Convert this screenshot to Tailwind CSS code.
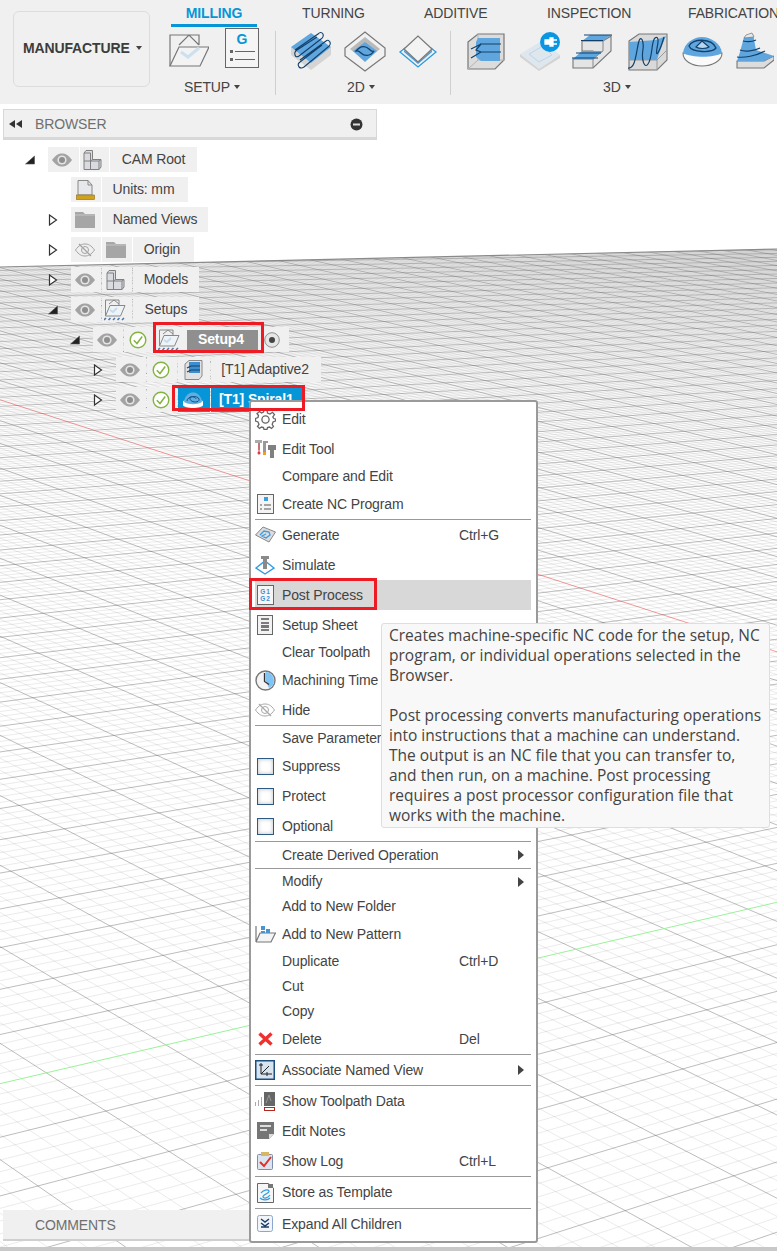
<!DOCTYPE html>
<html lang="en">

<head>
  <meta charset="UTF-8" />
  <title>Manufacture - Post Process</title>
  <script src="https://cdn.jsdelivr.net/npm/@tailwindcss/browser@4"></script>
</head>

<body class="bg-white">
  <!-- shared icons -->
  <svg class="hidden">
    <symbol id="eye" viewBox="0 0 20 14">
      <path d="M0 7C4 1.500 7 .5 10 .5S16 1.500 20 7C16 12.500 13 13.500 10 13.500S4 12.500 0 7Z" fill="#a3a3a3" />
      <circle cx="10" cy="7" r="4.600" fill="#e4e4e4" />
      <circle cx="10" cy="7" r="3" fill="#8e8e8e" />
    </symbol>
    <symbol id="check" viewBox="0 0 18 18">
      <circle cx="9" cy="9" r="7.800" fill="#fff" stroke="#83b341" stroke-width="1.400" />
      <path d="M4.800 9.200 8 12.500 13.200 5.500" fill="none" stroke="#83b341" stroke-width="1.500" />
    </symbol>
    <symbol id="open" viewBox="0 0 10 12">
      <path d="M1.500 1 8.500 6 1.500 11Z" fill="#fff" stroke="#333" stroke-width="1.200" />
    </symbol>
    <symbol id="down" viewBox="0 0 10 10">
      <path d="M9.500 1V9H.5Z" fill="#222" stroke="#555" stroke-width=".6" />
    </symbol>
    <symbol id="model" viewBox="0 0 20 20">
      <path d="M1 3 3 .5H9.500V9.500H18V17L16 19.500H1Z" fill="#d9dbe0" stroke="#808080" stroke-width="1" />
      <path d="M1 3H7.500V19.500M1 11H7.500L9.500 9.500M7.500 11H16V19.500M16 11 18 9.500" fill="none" stroke="#808080" stroke-width="1" />
    </symbol>
    <symbol id="folder" viewBox="0 0 20 16">
      <path d="M0 0H8L10 2H20V16H0Z" fill="#a6a6a6" />
      <path d="M0 3H20" stroke="#c6c6c6" stroke-width="1" />
    </symbol>
    <symbol id="setup" viewBox="0 0 24 24">
      <path d="M1.500 18V2H15V7M5 6 10 2 15 6" fill="none" stroke="#888" stroke-width="1" />
      <path d="M6 7.500H21L16.500 18H1.500Z" fill="#eef3f7" stroke="#888" stroke-width="1" />
      <path d="M6 12 9 14 13 10" fill="none" stroke="#c3dcef" stroke-width="2" />
      <path d="M0 22 2 20M4.500 22 6.500 20M9 22 11 20M13.500 22 15.500 20M18 22 20 20" stroke="#4c78ab" stroke-width="1.600" />
    </symbol>
  </svg>

  <div class="relative w-[777px] h-[1251px] overflow-hidden bg-white font-['Liberation_Sans',sans-serif] text-[14px] tracking-[-0.13px] text-[#444]">

    <!-- viewport grid, filled in by the script below -->
    <svg id="grid" class="absolute inset-0" width="777" height="1251">
      <defs>
        <clipPath id="floor">
          <polygon points="0,267 777,249 777,1251 0,1251" />
        </clipPath>
      </defs>
      <g id="gridLines" clip-path="url(#floor)"></g>
      <line x1="0" y1="267" x2="777" y2="249" stroke="#8a8a8a" stroke-width="1.200" />
    </svg>

    <!-- toolbar -->
    <div class="relative flex h-[104px] bg-[#f0f0f0]">
      <div class="w-[171px] shrink-0 pl-[13px] pt-[11px]">
        <div class="flex h-[76px] w-[137px] items-center rounded-[6px] border border-[#dcdcdc] pb-[2px] pl-[9px] font-bold text-[#3c3c3c]">
          MANUFACTURE
          <span class="ml-[6px] h-0 w-0 border-x-[3.5px] border-t-[4px] border-x-transparent border-t-[#444]"></span>
        </div>
      </div>
      <div class="flex-1">
        <!-- tabs -->
        <div class="flex h-[28px] whitespace-nowrap">
          <div class="h-[27px] w-[86px] border-b-[3px] border-[#0696d7] pt-[3px] text-center font-bold text-[#0696d7]">MILLING</div>
          <div class="w-[167px] pl-[45px] pt-[3px]">TURNING</div>
          <div class="w-[123px] pt-[3px]">ADDITIVE</div>
          <div class="w-[141px] pt-[3px]">INSPECTION</div>
          <div class="pt-[3px]">FABRICATION</div>
        </div>
        <!-- groups -->
        <div class="flex">
          <div class="w-[104px]">
            <div class="ml-[-2px] flex h-[44px] items-start">
              <svg width="40" height="38" viewBox="0 0 40 38" class="mt-[4px]">
                <path d="M1 34V3H30V13M10 13 20 3 30 13" fill="none" stroke="#777" stroke-width="1.200" />
                <path d="M10 15H40L31 34H1Z" fill="#f3f3f3" stroke="#777" stroke-width="1.200" />
                <path d="M12 20 19 25 30 16" fill="none" stroke="#cde0ef" stroke-width="3" />
              </svg>
              <svg width="35" height="40" viewBox="0 0 35 40" class="ml-[16px]">
                <rect x=".5" y=".5" width="33" height="39" fill="#f5f5f5" stroke="#666" />
                <text x="17" y="16" text-anchor="middle" font-family="Liberation Sans" font-weight="700" font-size="14" fill="#0696d7">G</text>
                <rect x="5" y="22" width="3" height="3" fill="#666" />
                <rect x="5" y="30" width="3" height="3" fill="#666" />
                <path d="M10 23.500H30M10 31.500H30" stroke="#666" />
              </svg>
            </div>
            <div class="mt-[6px] flex h-[18px] items-center pl-[13px]">SETUP<span class="ml-[4px] h-0 w-0 border-x-[3px] border-t-[4px] border-x-transparent border-t-[#444]"></span></div>
          </div>
          <div class="my-[3px] h-[64px] w-px bg-[#cfcfcf]"></div>
          <div class="w-[174px]">
            <div class="flex h-[44px] items-start pl-[14px]">
              <svg width="42" height="42" viewBox="0 0 42 42" class="mt-[3px]">
                <path d="M1 16 21 32 41 16V24L21 39 1 24Z" fill="#d4d4d4" />
                <path d="M1 16 21 2 41 16 21 32Z" fill="#5fa6de" />
                <path d="M5 19 28 3Q31 0 33 3 34 6 31 8L9 25Q6 27 5 24 4 21 7 19L27 6M10 29 36 10Q38 8 40 11 41 14 38 16L14 36Q11 38 9 36 7 33 10 31L32 14" fill="none" stroke="#12406b" stroke-width="1.100" />
              </svg>
              <svg width="42" height="42" viewBox="0 0 42 42" class="ml-[12px] mt-[3px]">
                <path d="M1 17 21 1 41 17V25L21 40 1 25Z" fill="#f1f1f1" stroke="#777" stroke-width="1.200" />
                <path d="M6 18 21 6 36 18 21 30Z" fill="#b9b9b9" />
                <path d="M9 20 21 11 33 20 21 31Z" fill="#5fa6de" />
                <path d="M12 20C17 14 22 15 25 18S29 21 30 20C26 26 20 25 17 22S13 20 12 20Z" fill="none" stroke="#12406b" stroke-width="1.300" />
              </svg>
              <svg width="40" height="36" viewBox="0 0 40 36" class="ml-[12px] mt-[6px]">
                <path d="M2 18 20 33 38 18 33 14 20 25 7 14Z" fill="none" stroke="#2c9be0" stroke-width="1.300" />
                <path d="M6 16 20 28 34 16V18L20 30 6 18Z" fill="#4f9bd6" />
                <path d="M6 15 20 2 34 15 20 28Z" fill="#f3f3f3" stroke="#777" stroke-width="1.200" />
              </svg>
            </div>
            <div class="mt-[6px] flex h-[18px] items-center pl-[71px]">2D<span class="ml-[4px] h-0 w-0 border-x-[3px] border-t-[4px] border-x-transparent border-t-[#444]"></span></div>
          </div>
          <div class="my-[3px] h-[64px] w-px bg-[#cfcfcf]"></div>
          <div class="flex-1">
            <div class="flex h-[44px] items-start pl-[16px]">
              <svg width="38" height="38" viewBox="0 0 38 38" class="mt-[5px]">
                <path d="M1 9 11 1H37V27L28 36H1Z" fill="#dcdcdc" stroke="#777" stroke-width="1.200" />
                <path d="M1 36 11 27H37M11 27V1" fill="none" stroke="#b5b5b5" />
                <path d="M11 5H33V28H14L9 24V9Z" fill="#5fa6de" />
                <path d="M4 16 14 11H34M4 25 14 19H34M14 11 9 17 14 19" fill="none" stroke="#12406b" stroke-width="1.200" />
              </svg>
              <svg width="42" height="40" viewBox="0 0 42 40" class="ml-[14px] mt-[3px]">
                <path d="M1 23 24 9 41 24 20 38Z" fill="#dfe7ee" />
                <path d="M1 23 20 38V40L1 26ZM20 38 41 24V27L20 40Z" fill="#d3d3d3" />
                <path d="M10 23 24 15 33 24 20 31Z" fill="none" stroke="#bcd5e8" />
                <circle cx="31" cy="11" r="10" fill="#0a96e2" />
                <path d="M26 9H31V7H34V15H31V13H26ZM34 9H38M34 13H38" fill="#fff" stroke="#fff" stroke-width="1.300" />
              </svg>
              <svg width="42" height="38" viewBox="0 0 42 38" class="ml-[11px] mt-[5px]">
                <path d="M1 26H21V18H10V8H31L39 3V18L21 35H1Z" fill="#e4e4e4" stroke="#777" stroke-width="1.100" />
                <path d="M31 8V18L21 26M21 35V26" fill="none" stroke="#888" />
                <path d="M10 8 18 2H39L31 8Z" fill="#5fa6de" />
                <path d="M1 26 10 18H31L21 26Z" fill="#5fa6de" />
                <path d="M12 2H40M9 7.500H31M4 20H29M0 25H26" stroke="#12406b" stroke-width="1.200" />
              </svg>
              <svg width="41" height="38" viewBox="0 0 41 38" class="ml-[14px] mt-[5px]">
                <path d="M1 8 11 1H39V27L29 37H1Z" fill="#d9d9d9" stroke="#777" stroke-width="1.100" />
                <path d="M1 27H29V37M29 27 39 17" fill="none" stroke="#999" />
                <path d="M1 9 28 7 38 3C35 10 31 20 29 27H1Z" fill="#5fa6de" />
                <path d="M0 35C8 36 8 18 11 8 13 2 16 8 15 16 13 28 17 36 20 31 25 24 23 8 27 5 30 3 31 6 29 15 27 27 32 18 36 4" fill="none" stroke="#12406b" stroke-width="1.200" />
              </svg>
              <svg width="41" height="31" viewBox="0 0 41 31" class="ml-[13px] mt-[8px]">
                <path d="M1 17C1 25 10 30 20 30S40 25 40 17Z" fill="#fafafa" stroke="#777" stroke-width="1.100" />
                <path d="M1 17C2 7 12 1 20 1S39 7 40 17C32 22 10 22 1 17Z" fill="#5fa6de" />
                <path d="M7 10C10 2 30 2 34 12 30 17 10 17 7 10Z" fill="none" stroke="#12406b" stroke-width="1.300" />
                <path d="M14 11 20 5 27 11C24 13 17 13 14 11Z" fill="#b8d6ee" stroke="#12406b" stroke-width="1.200" />
              </svg>
              <svg width="38" height="37" viewBox="0 0 38 37" class="ml-[13px] mt-[4px]">
                <path d="M1 29H28L38 24V28L28 36H1Z" fill="#dcdcdc" stroke="#777" stroke-width="1.100" />
                <path d="M8 5 17 2 20 18 38 24 28 29H1L4 20Z" fill="#5fa6de" />
                <path d="M10 3 16 1 18 5 8 6Z" fill="#e8e8e8" stroke="#777" stroke-width=".7" />
                <path d="M7 9C11 10 16 10 20 8M4 18C9 20 18 19 24 16M1 25C8 26 20 24 29 19" fill="none" stroke="#12406b" stroke-width="1.200" />
              </svg>
            </div>
            <div class="mt-[6px] flex h-[18px] items-center pl-[152px]">3D<span class="ml-[4px] h-0 w-0 border-x-[3px] border-t-[4px] border-x-transparent border-t-[#444]"></span></div>
          </div>
        </div>
      </div>
    </div>

    <!-- browser panel -->
    <div class="relative ml-[3px] mt-[5px] flex h-[31px] w-[374px] items-center border border-b-[3px] border-[#d8d8d8] bg-[#f0f0f0] pl-[5px] pr-[13px] pt-[1px] text-[#6f6f6f]">
      <svg width="13" height="8" viewBox="0 0 13 8">
        <path d="M6 0V8L0 4ZM13 0V8L7 4Z" fill="#333" />
      </svg>
      <span class="ml-[13px]">BROWSER</span>
      <svg class="ml-auto" width="13" height="13" viewBox="0 0 13 13">
        <circle cx="6.500" cy="6.500" r="6" fill="#333" />
        <rect x="3" y="5.500" width="7" height="2" fill="#ddd" />
      </svg>
    </div>

    <!-- tree -->
    <div class="relative mt-[7px] flex flex-col gap-[5px]">
      <div class="ml-[25px] flex h-[25px] items-center">
        <svg width="23" height="10" viewBox="0 0 23 10"><use href="#down" width="10" height="10" /></svg>
        <div class="flex h-full gap-px">
          <div class="flex w-[31px] items-center justify-center bg-[#f0f0f0] pr-[3px]"><svg width="20" height="14"><use href="#eye" /></svg></div>
          <div class="flex w-[29px] items-center justify-center bg-[#f0f0f0] pr-[3px]"><svg width="20" height="20"><use href="#model" /></svg></div>
          <div class="flex w-[87px] items-center justify-center bg-[#f0f0f0]">CAM Root</div>
        </div>
      </div>
      <div class="ml-[71px] flex h-[25px] gap-px">
        <div class="flex w-[30px] items-center justify-center bg-[#f0f0f0] pr-[2px]">
          <svg width="19" height="20" viewBox="0 0 19 20">
            <path d="M2 .5H12L16 5V15H2Z" fill="#e6e8ec" stroke="#888" />
            <path d="M12 .5V5H16" fill="none" stroke="#888" />
            <rect x=".5" y="15" width="18" height="4.500" fill="#d3a21c" stroke="#8a6a10" stroke-width=".6" />
          </svg>
        </div>
        <div class="flex w-[86px] items-center justify-center bg-[#f0f0f0] pr-[3px]">Units: mm</div>
      </div>
      <div class="ml-[48px] flex h-[25px] items-center">
        <svg width="23" height="12" viewBox="0 0 23 12"><use href="#open" width="10" height="12" /></svg>
        <div class="flex h-full gap-px">
          <div class="flex w-[30px] items-center justify-center bg-[#f0f0f0] pr-[3px]"><svg width="20" height="16"><use href="#folder" /></svg></div>
          <div class="flex w-[106px] items-center justify-center bg-[#f0f0f0]">Named Views</div>
        </div>
      </div>
      <div class="ml-[48px] flex h-[25px] items-center">
        <svg width="23" height="12" viewBox="0 0 23 12"><use href="#open" width="10" height="12" /></svg>
        <div class="flex h-full gap-px">
          <div class="flex w-[30px] items-center justify-center bg-[#f0f0f0] pr-[3px]">
            <svg width="20" height="14" viewBox="0 0 20 14">
              <path d="M.5 7C4 2 7 1 10 1S16 2 19.500 7C16 12 13 13 10 13S4 12 .5 7Z" fill="none" stroke="#a3a3a3" />
              <circle cx="10" cy="7" r="3.500" fill="none" stroke="#a3a3a3" />
              <path d="M4 1 16 13" stroke="#a3a3a3" stroke-width="1.300" />
            </svg>
          </div>
          <div class="flex w-[30px] items-center justify-center bg-[#f0f0f0] pr-[3px]"><svg width="20" height="16"><use href="#folder" /></svg></div>
          <div class="flex w-[61px] items-center justify-center bg-[#f0f0f0] pr-[3px]">Origin</div>
        </div>
      </div>
      <div class="ml-[48px] flex h-[25px] items-center">
        <svg width="23" height="12" viewBox="0 0 23 12"><use href="#open" width="10" height="12" /></svg>
        <div class="flex h-full gap-px">
          <div class="flex w-[30px] items-center justify-center bg-[#f0f0f0] pr-[3px]"><svg width="20" height="14"><use href="#eye" /></svg></div>
          <div class="flex w-[30px] items-center justify-center bg-[#f0f0f0] pr-[3px]"><svg width="20" height="20"><use href="#model" /></svg></div>
          <div class="flex w-[66px] items-center justify-center bg-[#f0f0f0]">Models</div>
        </div>
      </div>
      <div class="ml-[48px] flex h-[25px] items-center">
        <svg width="23" height="10" viewBox="0 0 23 10"><use href="#down" width="10" height="10" /></svg>
        <div class="flex h-full gap-px">
          <div class="flex w-[30px] items-center justify-center bg-[#f0f0f0] pr-[3px]"><svg width="20" height="14"><use href="#eye" /></svg></div>
          <div class="flex w-[30px] items-center justify-center bg-[#f0f0f0] pr-[3px]"><svg width="24" height="24"><use href="#setup" /></svg></div>
          <div class="flex w-[66px] items-center justify-center bg-[#f0f0f0]">Setups</div>
        </div>
      </div>
      <div class="ml-[70px] flex h-[25px] items-center">
        <svg width="23" height="10" viewBox="0 0 23 10"><use href="#down" width="10" height="10" /></svg>
        <div class="flex h-full gap-px">
          <div class="flex w-[30px] items-center justify-center bg-[#f0f0f0] pr-[3px]"><svg width="20" height="14"><use href="#eye" /></svg></div>
          <div class="flex w-[30px] items-center justify-center bg-[#f0f0f0] pr-[3px]"><svg width="18" height="18"><use href="#check" /></svg></div>
          <div class="flex w-[108px] items-center bg-[#f0f0f0] pl-[3px]">
            <svg width="24" height="24"><use href="#setup" /></svg>
            <div class="ml-[5px] flex h-[20px] w-[71px] items-center bg-[#8f8f8f] pl-[11px] font-bold text-white">Setup4</div>
          </div>
          <div class="flex w-[25px] items-center bg-[#f0f0f0]">
            <svg width="16" height="16" viewBox="0 0 16 16">
              <circle cx="8" cy="8" r="7.300" fill="#e6e6e6" stroke="#8f8f8f" />
              <circle cx="8" cy="8" r="3" fill="#444" />
            </svg>
          </div>
        </div>
      </div>
      <div class="ml-[93px] flex h-[25px] items-center">
        <svg width="23" height="12" viewBox="0 0 23 12"><use href="#open" width="10" height="12" /></svg>
        <div class="flex h-full gap-px">
          <div class="flex w-[30px] items-center justify-center bg-[#f0f0f0] pr-[3px]"><svg width="20" height="14"><use href="#eye" /></svg></div>
          <div class="flex w-[30px] items-center justify-center bg-[#f0f0f0] pr-[3px]"><svg width="18" height="18"><use href="#check" /></svg></div>
          <div class="flex w-[32px] items-center justify-center bg-[#f0f0f0] pr-[2px]">
            <svg width="19" height="20" viewBox="0 0 19 20">
              <path d="M1 4 5 .5H18V16L15 19.500H1Z" fill="#e2e2e2" stroke="#888" />
              <path d="M5 2H16V13H5Z" fill="#3b8fd0" />
              <path d="M3 8 7 6H16M3 12 7 10H16" fill="none" stroke="#12406b" stroke-width="1.200" />
            </svg>
          </div>
          <div class="flex w-[110px] items-center justify-center bg-[#f0f0f0] pr-[2px]">[T1] Adaptive2</div>
        </div>
      </div>
      <div class="ml-[93px] flex h-[25px] items-center">
        <svg width="23" height="12" viewBox="0 0 23 12"><use href="#open" width="10" height="12" /></svg>
        <div class="flex h-full gap-px">
          <div class="flex w-[30px] items-center justify-center bg-[#f0f0f0] pr-[3px]"><svg width="20" height="14"><use href="#eye" /></svg></div>
          <div class="flex w-[30px] items-center justify-center bg-[#f0f0f0] pr-[3px]"><svg width="18" height="18"><use href="#check" /></svg></div>
          <div class="flex w-[32px] items-center justify-center bg-[#0696d7] pr-[2px]">
            <svg width="20" height="16" viewBox="0 0 20 16">
              <path d="M0 10C0 8 4 8 10 8S20 8 20 10V13C20 15 14 16 10 16S0 15 0 13Z" fill="#fff" />
              <path d="M1 10C2 3 6 .5 10 .5S18 3 19 10C14 13 6 13 1 10Z" fill="#5eb0e4" />
              <path d="M4 9C4 4 15 3 16 7S8 11 7 7 13 5 13 7" fill="none" stroke="#14507f" />
            </svg>
          </div>
          <div class="flex w-[93px] items-center bg-[#0696d7] pl-[8px] font-bold whitespace-nowrap text-white">[T1] Spiral1</div>
        </div>
      </div>
    </div>

    <!-- comments panel -->
    <div class="absolute bottom-[10px] left-[3px] flex h-[31px] w-[250px] items-center border-b-2 border-[#cfcfcf] bg-[#f0f0f0] pl-[32px] pt-[2px] text-[#6f6f6f]">COMMENTS</div>

    <!-- context menu -->
    <div class="absolute left-[249px] top-[400px] w-[289px] rounded-[3px] border-2 border-[#9a9a9a] bg-white pb-[2px] pl-[4px] pr-[5px] pt-[2px]">
      <div class="flex h-[30px] items-center">
        <span class="w-[27px] shrink-0">
          <svg width="21" height="21" viewBox="0 0 21 21">
            <circle cx="10.500" cy="10.500" r="3.600" fill="#fff" stroke="#666" stroke-width="1.300" />
            <path d="M9 1H12L12.500 4 15 5 17.500 3.300 19.500 5.500 17.800 8 18.800 9.500 20.500 10V12L18 13 17.200 15.500 18.500 17.500 16.500 19.500 14.500 18 12.500 18.500 12 20.500H9L8.500 18.500 6.500 18 4.500 19.500 2.500 17.500 4 15.500 3 13 .5 12V9.500L3 8.500 3.500 6.500 2 4.500 4.500 2.500 6.500 4 8.500 3Z" fill="none" stroke="#666" stroke-width="1.300" />
          </svg>
        </span>Edit
      </div>
      <div class="flex h-[30px] items-center">
        <span class="w-[27px] shrink-0">
          <svg width="21" height="20" viewBox="0 0 21 20">
            <path d="M0 1H7V4H5V11H3V4H0Z" fill="#aaa" />
            <circle cx="4" cy="14" r="1.500" fill="#e23a3a" /><path d="M4 4V14" stroke="#e23a3a" />
            <path d="M8 2H13V4H11V13H8Z" fill="#999" />
            <rect x="8" y="13" width="3" height="3" fill="#f0a020" />
            <path d="M13 6H21V11H19V19H15V11H13Z" fill="#808080" />
          </svg>
        </span>Edit Tool
      </div>
      <div class="flex h-[25px] items-center pl-[27px]">Compare and Edit</div>
      <div class="flex h-[30px] items-center">
        <span class="w-[27px] shrink-0">
          <svg width="18" height="20" viewBox="0 0 18 20" class="ml-[2px]">
            <rect x=".5" y=".5" width="16" height="19" fill="#f4f4f4" stroke="#666" />
            <rect x="7" y="3" width="4" height="4" fill="#3d9be0" />
            <path d="M3 11H5M7 11H14M3 15H5M7 15H14" stroke="#555" stroke-width="1.200" />
          </svg>
        </span>Create NC Program
      </div>
      <div class="h-px bg-[#999]"></div>
      <div class="flex h-[30px] items-center">
        <span class="w-[27px] shrink-0">
          <svg width="21" height="18" viewBox="0 0 21 18">
            <path d="M.5 9 8 1 20.500 6 14 16Z" fill="#dcdcdc" stroke="#888" />
            <path d="M5 9 9 5 14 6 15 9 11 12 7 10 11 8" fill="none" stroke="#3d9be0" stroke-width="1.300" />
          </svg>
        </span>Generate<span class="ml-auto w-[72px]">Ctrl+G</span>
      </div>
      <div class="flex h-[30px] items-center">
        <span class="w-[27px] shrink-0">
          <svg width="20" height="20" viewBox="0 0 20 20">
            <path d="M1 13 10 6 19 13 10 19Z" fill="none" stroke="#2f9be0" stroke-width="1.400" />
            <path d="M6 1H14V4H12V14H8V4H6Z" fill="#8a8a8a" />
          </svg>
        </span>Simulate
      </div>
      <div class="flex h-[30px] items-center bg-[#d8d8d8]">
        <span class="w-[27px] shrink-0">
          <svg width="18" height="20" viewBox="0 0 18 20" class="ml-[2px]">
            <rect x=".5" y=".5" width="16" height="19" fill="#f6f6f6" stroke="#666" />
            <text x="8.500" y="9" text-anchor="middle" font-family="Liberation Sans" font-weight="700" font-size="6.500" letter-spacing="1" fill="#3d8fd0">G1</text>
            <text x="8.500" y="16" text-anchor="middle" font-family="Liberation Sans" font-weight="700" font-size="6.500" letter-spacing="1" fill="#3d8fd0">G2</text>
          </svg>
        </span>Post Process
      </div>
      <div class="flex h-[30px] items-center">
        <span class="w-[27px] shrink-0">
          <svg width="18" height="20" viewBox="0 0 18 20" class="ml-[2px]">
            <rect x=".5" y=".5" width="15" height="19" fill="#f2f2f2" stroke="#666" />
            <path d="M4 4H12M4 8H12M4 15H12" stroke="#555" stroke-width="1.400" />
            <rect x="4" y="10" width="8" height="3" fill="#777" />
          </svg>
        </span>Setup Sheet
      </div>
      <div class="flex h-[25px] items-center pl-[27px]">Clear Toolpath</div>
      <div class="flex h-[30px] items-center">
        <span class="w-[27px] shrink-0">
          <svg width="21" height="21" viewBox="0 0 21 21">
            <circle cx="10.500" cy="10.500" r="9.500" fill="#f4f4f4" stroke="#777" stroke-width="1.400" />
            <path d="M10.500 2A8.500 8.500 0 0 1 19 10.500 8.500 8.500 0 0 1 14 18L10.500 10.500Z" fill="#7fc4f5" />
            <path d="M9.500 3V11.500L14 14.500" fill="none" stroke="#333" stroke-width="1.300" />
          </svg>
        </span>Machining Time
      </div>
      <div class="flex h-[30px] items-center">
        <span class="w-[27px] shrink-0">
          <svg width="20" height="14" viewBox="0 0 20 14">
            <path d="M.5 7C4 2 7 1 10 1S16 2 19.500 7C16 12 13 13 10 13S4 12 .5 7Z" fill="none" stroke="#a8a8a8" />
            <circle cx="10" cy="7" r="3.500" fill="none" stroke="#a8a8a8" />
            <path d="M4 1 16 13" stroke="#a8a8a8" stroke-width="1.300" />
          </svg>
        </span>Hide
      </div>
      <div class="h-px bg-[#999]"></div>
      <div class="flex h-[25px] items-center pl-[27px]">Save Parameters</div>
      <div class="flex h-[30px] items-center">
        <span class="ml-[2px] mr-[8px] h-[17px] w-[17px] shrink-0 border-[1.5px] border-[#2a5b86] bg-white shadow-[inset_0_0_4px_#bbb]"></span>Suppress
      </div>
      <div class="flex h-[30px] items-center">
        <span class="ml-[2px] mr-[8px] h-[17px] w-[17px] shrink-0 border-[1.5px] border-[#2a5b86] bg-white shadow-[inset_0_0_4px_#bbb]"></span>Protect
      </div>
      <div class="flex h-[30px] items-center">
        <span class="ml-[2px] mr-[8px] h-[17px] w-[17px] shrink-0 border-[1.5px] border-[#2a5b86] bg-white shadow-[inset_0_0_4px_#bbb]"></span>Optional
      </div>
      <div class="h-px bg-[#999]"></div>
      <div class="flex h-[26px] items-center pl-[27px]">Create Derived Operation
        <span class="ml-auto mr-[7px] h-0 w-0 border-y-[5px] border-l-[6px] border-y-transparent border-l-[#444]"></span>
      </div>
      <div class="h-px bg-[#999]"></div>
      <div class="flex h-[25px] items-center pl-[27px]">Modify
        <span class="ml-auto mr-[7px] h-0 w-0 border-y-[5px] border-l-[6px] border-y-transparent border-l-[#444]"></span>
      </div>
      <div class="flex h-[25px] items-center pl-[27px]">Add to New Folder</div>
      <div class="flex h-[30px] items-center">
        <span class="w-[27px] shrink-0">
          <svg width="21" height="18" viewBox="0 0 21 18">
            <path d="M1 17V1M1 17H16L20.500 8H5L1 17" fill="#f4f4f4" stroke="#777" stroke-width="1.200" />
            <path d="M6 1H10V5H6ZM6 6H10V8H6ZM11 4H15V8H11Z" fill="#4b94d0" />
          </svg>
        </span>Add to New Pattern
      </div>
      <div class="flex h-[25px] items-center pl-[27px]">Duplicate<span class="ml-auto w-[72px]">Ctrl+D</span></div>
      <div class="flex h-[25px] items-center pl-[27px]">Cut</div>
      <div class="flex h-[25px] items-center pl-[27px]">Copy</div>
      <div class="flex h-[30px] items-center">
        <span class="w-[27px] shrink-0">
          <svg width="15" height="14" viewBox="0 0 15 14" class="ml-[3px]">
            <path d="M1.500 1.500 13.500 12.500M13.500 1.500 1.500 12.500" stroke="#f0302f" stroke-width="3.400" />
          </svg>
        </span>Delete<span class="ml-auto w-[72px]">Del</span>
      </div>
      <div class="h-px bg-[#999]"></div>
      <div class="flex h-[30px] items-center">
        <span class="w-[27px] shrink-0">
          <svg width="20" height="20" viewBox="0 0 20 20">
            <rect x=".75" y=".75" width="18.500" height="18.500" fill="#d7e3ee" stroke="#1c4f7e" stroke-width="1.500" />
            <path d="M6 3V14H17M4 5H8M12 12V16M6 14 14 6" fill="none" stroke="#222" />
          </svg>
        </span>Associate Named View
        <span class="ml-auto mr-[7px] h-0 w-0 border-y-[5px] border-l-[6px] border-y-transparent border-l-[#444]"></span>
      </div>
      <div class="h-px bg-[#999]"></div>
      <div class="flex h-[30px] items-center">
        <span class="w-[27px] shrink-0">
          <svg width="20" height="19" viewBox="0 0 20 19">
            <path d="M.5 10V14M3.500 8V14M6.500 5V14" stroke="#aaa" />
            <rect x="9" y="0" width="11" height="14" fill="#666" />
            <path d="M11 11 14 3 16 9" fill="none" stroke="#999" />
            <rect x="9.500" y="15.500" width="10" height="3" fill="#fff" stroke="#b22a1f" />
          </svg>
        </span>Show Toolpath Data
      </div>
      <div class="flex h-[30px] items-center">
        <span class="w-[27px] shrink-0">
          <svg width="18" height="18" viewBox="0 0 18 18" class="ml-[2px]">
            <path d="M0 0H17V12L12 17H0Z" fill="#757575" />
            <path d="M3 4H14M3 8H10" stroke="#fff" stroke-width="1.400" />
            <path d="M12 17V12H17" fill="#ddd" />
          </svg>
        </span>Edit Notes
      </div>
      <div class="flex h-[30px] items-center">
        <span class="w-[27px] shrink-0">
          <svg width="17" height="18" viewBox="0 0 17 18" class="ml-[2px]">
            <rect x=".5" y="2.500" width="15" height="15" rx="1" fill="#dbe4f0" stroke="#7c8db0" />
            <rect x="4" y="0" width="8" height="4" fill="#d8b668" />
            <path d="M3 10 7 14 14 5" fill="none" stroke="#e0312a" stroke-width="2" />
          </svg>
        </span>Show Log<span class="ml-auto w-[72px]">Ctrl+L</span>
      </div>
      <div class="h-px bg-[#999]"></div>
      <div class="flex h-[31px] items-center">
        <span class="w-[27px] shrink-0">
          <svg width="17" height="20" viewBox="0 0 17 20" class="ml-[2px]">
            <path d="M.5.5H11.500L16.500 5V19.500H.5Z" fill="#f6f6f6" stroke="#666" />
            <path d="M11 1H16V5H11Z" fill="#777" />
            <path d="M4 10C6 7 11 6 12 8S5 12 6 14 11 15 13 12M3 15C6 18 11 17 13 15" fill="none" stroke="#2f9be0" stroke-width="1.200" />
          </svg>
        </span>Store as Template
      </div>
      <div class="h-px bg-[#999]"></div>
      <div class="flex h-[30px] items-center">
        <span class="w-[27px] shrink-0">
          <svg width="17" height="18" viewBox="0 0 17 18" class="ml-[2px]">
            <rect x=".5" y=".5" width="15" height="16" rx="2" fill="#f1f5fa" stroke="#8aa8cc" />
            <path d="M4 4 8 7 12 4M4 8 8 11 12 8M4 12H12" fill="none" stroke="#1f3f6b" stroke-width="1.500" />
          </svg>
        </span>Expand All Children
      </div>
    </div>

    <!-- tooltip -->
    <div class="absolute left-[381px] top-[623px] w-[389px] rounded-[3px] border border-[#dedede] bg-[#f8f8f8] pb-[2px] pl-[7px] pt-[1px] font-['Open_Sans',sans-serif] text-[15.500px] leading-[20px] tracking-normal text-[#444]">
      <p>Creates machine-specific NC code for the setup, NC<br>program, or individual operations selected in the<br>Browser.</p>
      <p class="mt-[20px]">Post processing converts manufacturing operations<br>into instructions that a machine can understand.<br>The output is an NC file that you can transfer to,<br>and then run, on a machine. Post processing<br>requires a post processor configuration file that<br>works with the machine.</p>
    </div>

    <!-- red annotation boxes -->
    <div class="absolute left-[153px] top-[322px] h-[31px] w-[111px] border-[3px] border-[#ed1c24]"></div>
    <div class="absolute left-[172px] top-[385px] h-[26px] w-[133px] border-[3px] border-[#ed1c24]"></div>
    <div class="absolute left-[249px] top-[578px] h-[32px] w-[128px] border-[3px] border-[#ed1c24]"></div>

    <!-- bottom bar -->
    <div class="absolute bottom-0 left-0 h-[4px] w-full bg-[#c8c8c8]"></div>
  </div>

  <script>
    // perspective grid: both line families run to a vanishing point
    const group = document.getElementById('gridLines');

    function addLine(x1, y1, x2, y2, color, width) {
      const line = document.createElementNS('http://www.w3.org/2000/svg', 'line');
      line.setAttribute('x1', x1);
      line.setAttribute('y1', y1);
      line.setAttribute('x2', x2);
      line.setAttribute('y2', y2);
      line.setAttribute('stroke', color);
      line.setAttribute('stroke-width', width);
      group.appendChild(line);
    }

    function drawFamily(vx, vy, refX, horizon, a, d, from, to, special) {
      for (let n = from * 5; n <= to * 5; n++) {
        const i = n / 5;
        const refY = horizon + 1 / (a + d * i);
        const k = (refY - vy) / (refX - vx);
        const yAt = x => vy + k * (x - vx);
        let color = n % 5 === 0 ? 'rgba(90,90,90,.4)' : 'rgba(90,90,90,.12)';
        if (i === special.index) color = special.color;
        addLine(-20, yAt(-20), 800, yAt(800), color, 1);
      }
    }

    drawFamily(-2040, -262, 540, -53, 0.001143, -0.0000642, -42, 9, { index: -7, color: '#f29a9a' });
    drawFamily(3755, 207, 777, -33.8, 0.0011147, -0.0000464, -52, 8, { index: 1, color: '#9af29a' });
  </script>
</body>

</html>
